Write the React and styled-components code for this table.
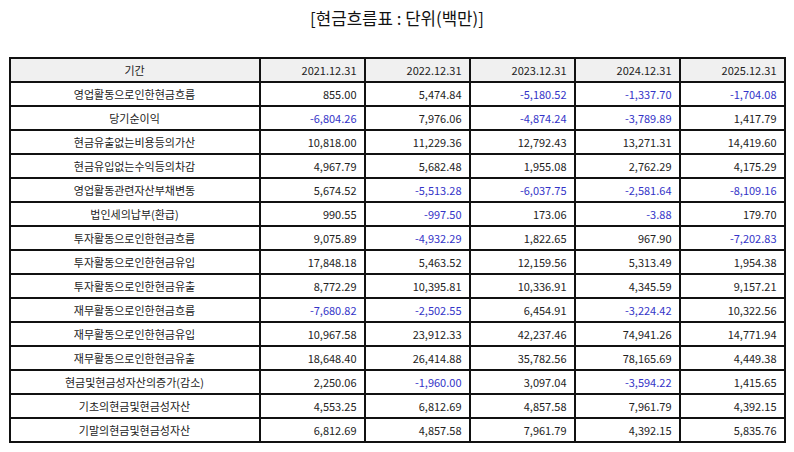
import React from "react";
import styled, { css, createGlobalStyle } from "styled-components";

const GlobalStyle = createGlobalStyle`
  body {
    margin: 0;
    background: #fff;
    font-family: "Noto Sans CJK KR", "Noto Sans", sans-serif;
  }
`;

const years = ["2021.12.31", "2022.12.31", "2023.12.31", "2024.12.31", "2025.12.31"];

const rows = [
  ["영업활동으로인한현금흐름", "855.00", "5,474.84", "-5,180.52", "-1,337.70", "-1,704.08"],
  ["당기순이익", "-6,804.26", "7,976.06", "-4,874.24", "-3,789.89", "1,417.79"],
  ["현금유출없는비용등의가산", "10,818.00", "11,229.36", "12,792.43", "13,271.31", "14,419.60"],
  ["현금유입없는수익등의차감", "4,967.79", "5,682.48", "1,955.08", "2,762.29", "4,175.29"],
  ["영업활동관련자산부채변동", "5,674.52", "-5,513.28", "-6,037.75", "-2,581.64", "-8,109.16"],
  ["법인세의납부(환급)", "990.55", "-997.50", "173.06", "-3.88", "179.70"],
  ["투자활동으로인한현금흐름", "9,075.89", "-4,932.29", "1,822.65", "967.90", "-7,202.83"],
  ["투자활동으로인한현금유입", "17,848.18", "5,463.52", "12,159.56", "5,313.49", "1,954.38"],
  ["투자활동으로인한현금유출", "8,772.29", "10,395.81", "10,336.91", "4,345.59", "9,157.21"],
  ["재무활동으로인한현금흐름", "-7,680.82", "-2,502.55", "6,454.91", "-3,224.42", "10,322.56"],
  ["재무활동으로인한현금유입", "10,967.58", "23,912.33", "42,237.46", "74,941.26", "14,771.94"],
  ["재무활동으로인한현금유출", "18,648.40", "26,414.88", "35,782.56", "78,165.69", "4,449.38"],
  ["현금및현금성자산의증가(감소)", "2,250.06", "-1,960.00", "3,097.04", "-3,594.22", "1,415.65"],
  ["기초의현금및현금성자산", "4,553.25", "6,812.69", "4,857.58", "7,961.79", "4,392.15"],
  ["기말의현금및현금성자산", "6,812.69", "4,857.58", "7,961.79", "4,392.15", "5,835.76"],
];

const Page = styled.div`
  display: flex;
  flex-direction: column;
  align-items: center;
  padding-top: 7px;
`;

const Title = styled.div`
  font-size: 16.8px;
  line-height: 22px;
  color: #111;
  margin-bottom: 28px;
`;

const Table = styled.table`
  width: 776px;
  border-collapse: collapse;
  table-layout: fixed;
  font-size: 11px;
  color: #222;
`;

const Col = styled.col`
  width: ${(p) => (p.$wide ? "250px" : "105px")};
`;

const cellBase = css`
  border: 2px solid #111;
  height: 22px;
  padding: 0 7px;
  line-height: 14px;
  white-space: nowrap;
  font-weight: 400;
  text-align: ${(p) => (p.$label ? "center" : "right")};
`;

const HeadCell = styled.th`
  ${cellBase};
  color: #222;
  background: #f0f0f0;
`;

const Cell = styled.td`
  ${cellBase};
  color: ${(p) => (p.$neg ? "#3434c8" : "#222")};
  background: #fff;
`;

const App = () => {
  return (
    <Page>
      <GlobalStyle />
      <Title>[현금흐름표 : 단위(백만)]</Title>
      <Table>
        <colgroup>
          <Col $wide />
          {years.map((y) => (
            <Col key={y} />
          ))}
        </colgroup>
        <thead>
          <tr>
            <HeadCell $label>기간</HeadCell>
            {years.map((y) => (
              <HeadCell key={y}>{y}</HeadCell>
            ))}
          </tr>
        </thead>
        <tbody>
          {rows.map(([label, ...vals]) => (
            <tr key={label}>
              <Cell $label>{label}</Cell>
              {vals.map((v, i) => (
                <Cell key={i} $neg={v.startsWith("-")}>
                  {v}
                </Cell>
              ))}
            </tr>
          ))}
        </tbody>
      </Table>
    </Page>
  );
};

export default App;
